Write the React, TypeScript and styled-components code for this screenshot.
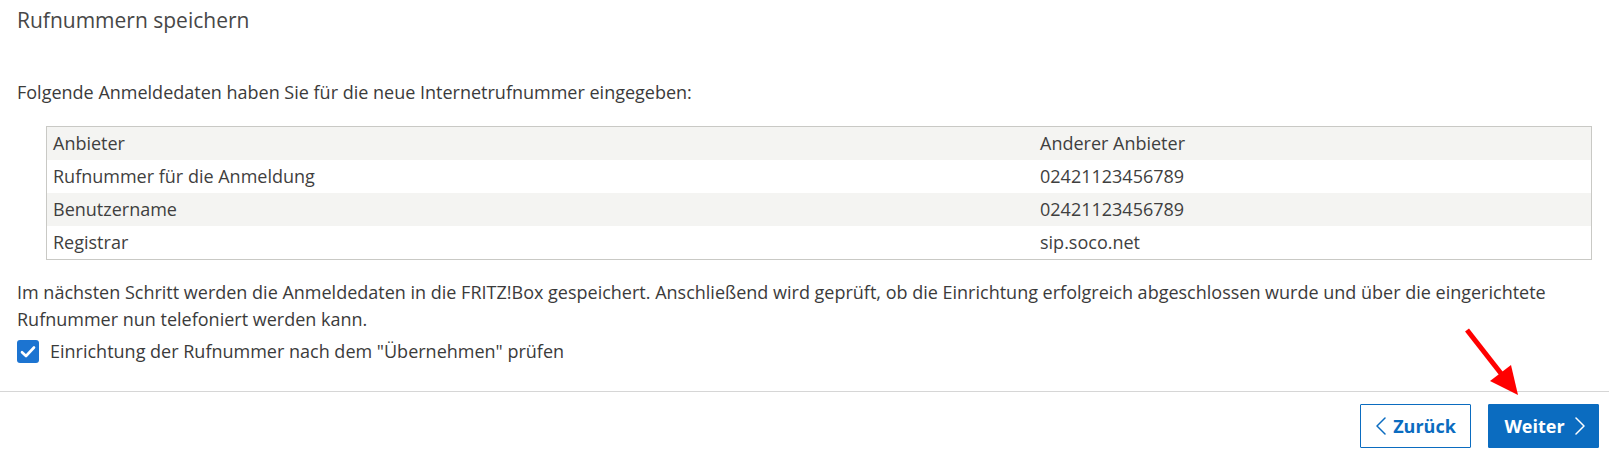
import React from "react";
import styled, { createGlobalStyle } from "styled-components";

const GlobalStyle = createGlobalStyle`
  html, body {
    margin: 0;
    padding: 0;
    background: #ffffff;
  }
  body {
    font-family: "Open Sans", "Noto Sans", sans-serif;
    color: #3b3b3b;
  }
  * { box-sizing: border-box; }
`;

const Page = styled.div`
  position: relative;
  width: 100%;
  height: 466px;
  display: flex;
  flex-direction: column;
  overflow: hidden;
`;

const Content = styled.div`
  padding: 0 17px;
  display: flex;
  flex-direction: column;
`;

const Title = styled.h2`
  margin: 0;
  padding-top: 6px;
  font-size: 21px;
  line-height: 28px;
  font-weight: 400;
  color: #474747;
`;

const Text = styled.p<{ $top: number }>`
  margin: ${(p) => p.$top}px 0 0;
  font-size: 18px;
  line-height: 27px;
  color: #3b3b3b;
`;

const DataTable = styled.div`
  margin: 20px 0 0 29px;
  border: 1px solid #c9c9c5;
  display: flex;
  flex-direction: column;
`;

const Row = styled.div<{ $striped: boolean }>`
  display: grid;
  grid-template-columns: 987px 1fr;
  height: 33px;
  align-items: center;
  background: ${(p) => (p.$striped ? "#f4f4f2" : "#ffffff")};
`;

const Cell = styled.div`
  padding: 0 6px;
  font-size: 18px;
  line-height: 33px;
  color: #3f3f3f;
  white-space: nowrap;
`;

const CheckRow = styled.label`
  margin-top: 5px;
  display: flex;
  align-items: center;
  gap: 11px;
  font-size: 18px;
  line-height: 27px;
  color: #3b3b3b;
  cursor: pointer;
`;

const CheckBox = styled.span`
  width: 22px;
  height: 23px;
  border-radius: 3px;
  background: #1c74d1;
  display: flex;
  align-items: center;
  justify-content: center;
  flex: none;
`;

const Footer = styled.div`
  margin-top: auto;
  border-top: 1px solid #d6d6d6;
  padding: 12px 10px 18px;
  display: flex;
  justify-content: flex-end;
  gap: 17px;
`;

const Button = styled.button<{ $primary?: boolean }>`
  width: 111px;
  height: 44px;
  display: flex;
  align-items: center;
  justify-content: center;
  gap: ${(p) => (p.$primary ? "10px" : "7px")};
  padding: 0;
  padding-left: ${(p) => (p.$primary ? "3px" : "0")};
  border: 1px solid #0b6cc0;
  border-radius: 1px;
  background: ${(p) => (p.$primary ? "#0b6cc0" : "#ffffff")};
  color: ${(p) => (p.$primary ? "#ffffff" : "#0b6cc0")};
  font-family: "Open Sans", "Noto Sans", sans-serif;
  font-size: 18px;
  font-weight: 700;
  cursor: pointer;
`;

const Annotation = styled.svg`
  position: absolute;
  left: 1455px;
  top: 320px;
  width: 80px;
  height: 85px;
  pointer-events: none;
`;

const Chevron = ({ dir }: { dir: "left" | "right" }) => (
  <svg width="11" height="18" viewBox="0 0 11 18" fill="none">
    <path
      d={dir === "left" ? "M10 1 L2 9 L10 17" : "M1 1 L9 9 L1 17"}
      stroke="currentColor"
      strokeWidth="1.5"
      strokeLinecap="round"
      strokeLinejoin="round"
    />
  </svg>
);

const rows: [string, string][] = [
  ["Anbieter", "Anderer Anbieter"],
  ["Rufnummer für die Anmeldung", "02421123456789"],
  ["Benutzername", "02421123456789"],
  ["Registrar", "sip.soco.net"],
];

export default function App() {
  return (
    <>
      <GlobalStyle />
      <Page>
        <Content>
          <Title>Rufnummern speichern</Title>
          <Text $top={45}>
            Folgende Anmeldedaten haben Sie für die neue Internetrufnummer eingegeben:
          </Text>
          <DataTable>
            {rows.map(([k, v], i) => (
              <Row key={k} $striped={i % 2 === 0}>
                <Cell>{k}</Cell>
                <Cell>{v}</Cell>
              </Row>
            ))}
          </DataTable>
          <Text $top={19}>
            Im nächsten Schritt werden die Anmeldedaten in die FRITZ!Box gespeichert. Anschließend wird
            geprüft, ob die Einrichtung erfolgreich abgeschlossen wurde und über die eingerichtete
            Rufnummer nun telefoniert werden kann.
          </Text>
          <CheckRow>
            <CheckBox>
              <svg width="16" height="14" viewBox="0 0 16 14" fill="none">
                <path
                  d="M2 7.2 L6 11 L14 2.5"
                  stroke="#ffffff"
                  strokeWidth="2.6"
                  strokeLinecap="round"
                  strokeLinejoin="round"
                />
              </svg>
            </CheckBox>
            Einrichtung der Rufnummer nach dem "Übernehmen" prüfen
          </CheckRow>
        </Content>
        <Footer>
          <Button type="button">
            <Chevron dir="left" />
            Zurück
          </Button>
          <Button type="button" $primary>
            Weiter
            <Chevron dir="right" />
          </Button>
        </Footer>
        <Annotation viewBox="1455 320 80 85">
          <line x1="1467" y1="330" x2="1503" y2="376" stroke="#ff0000" strokeWidth="5" />
          <polygon points="1518,395 1490,381 1511,365" fill="#ff0000" />
        </Annotation>
      </Page>
    </>
  );
}
